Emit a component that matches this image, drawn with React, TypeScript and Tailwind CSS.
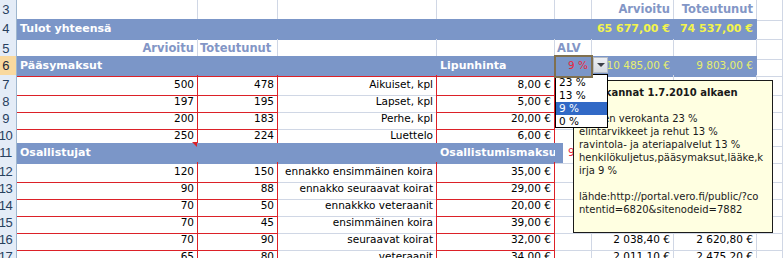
import React from "react";

const fmt = (v: number) => {
  const [i, d] = v.toFixed(2).split(".");
  return i.replace(/\B(?=(\d{3})+(?!\d))/g, " ") + "," + d + " €";
};

const cols = "grid grid-cols-[17px_181px_80px_159px_118px_37px_82px_83px_1fr]";
const cell = "px-[3px] flex items-center whitespace-nowrap overflow-hidden border-r border-b";

const GRID = "border-[#d0d7e5]";
const RED = "border-[#dc2128]";
const LABEL = "border-r-[#dc2128] border-b-[#d0d7e5]";
const BAND = "bg-[#7b96c8] border-[#7b96c8]";
const BANDRED = "bg-[#7b96c8] border-r-[#7b96c8] border-b-[#dc2128]";

const right = "justify-end";
const hdr = "font-bold text-[11.5px] text-[#8396c6]";
const white = "font-bold text-[11px] text-white";
const yellow = "font-bold text-[11px] text-[#f3f44c] justify-end";
const pale = "text-[#e6ef6e] justify-end";

type C = [string, string];

const tickets = [
  [500, 478, "Aikuiset, kpl", 8],
  [197, 195, "Lapset, kpl", 5],
  [200, 183, "Perhe, kpl", 20],
  [250, 224, "Luettelo", 6],
] as const;

const fees = [
  [120, 150, "ennakko ensimmäinen koira", 35],
  [90, 88, "ennakko seuraavat koirat", 29],
  [70, 50, "ennakkko veteraanit", 20],
  [70, 45, "ensimmäinen koira", 39],
  [70, 90, "seuraavat koirat", 32],
  [65, 80, "veteraanit", 34],
] as const;

const dataRow = (r: readonly [number, number, string, number]): C[] => [
  [String(r[0]), `${RED} ${right}`],
  [String(r[1]), `${RED} ${right}`],
  [r[2], `${LABEL} ${right}`],
  [fmt(r[3]), `${RED} ${right}`],
  ["", GRID],
  [fmt(r[0] * r[3] * 0.91), `${GRID} ${right}`],
  [fmt(r[1] * r[3] * 0.91), `${GRID} ${right}`],
  ["", GRID],
];

const rows: { n: number; h: string; active?: boolean; cells: C[] }[] = [
  {
    n: 3,
    h: "h-[19px]",
    cells: [
      ["", GRID], ["", GRID], ["", GRID], ["", GRID], ["", GRID],
      ["Arvioitu", `${GRID} ${hdr} ${right}`],
      ["Toteutunut", `${GRID} ${hdr} ${right}`],
      ["", GRID],
    ],
  },
  {
    n: 4,
    h: "h-[20px]",
    cells: [
      ["Tulot yhteensä", `${BAND} ${white}`],
      ["", BAND], ["", BAND], ["", BAND], ["", BAND],
      ["65 677,00 €", `${BAND} ${yellow}`],
      ["74 537,00 €", `${BAND} ${yellow}`],
      ["", GRID],
    ],
  },
  {
    n: 5,
    h: "h-[17px]",
    cells: [
      ["Arvioitu", `${GRID} ${hdr} ${right}`],
      ["Toteutunut", `${GRID} ${hdr} pl-[2px]`],
      ["", GRID], ["", GRID],
      ["ALV", `${GRID} ${hdr} pl-[2px]`],
      ["", GRID], ["", GRID], ["", GRID],
    ],
  },
  {
    n: 6,
    h: "h-[19px]",
    active: true,
    cells: [
      ["Pääsymaksut", `${BANDRED} ${white}`],
      ["", BANDRED], ["", BANDRED],
      ["Lipunhinta", `${BANDRED} ${white}`],
      ["9 %", `${BAND} text-[#e8283c] ${right} relative z-10 outline-2 outline-[#80704e] -outline-offset-1`],
      ["10 485,00 €", `${BAND} ${pale}`],
      ["9 803,00 €", `${BAND} ${pale}`],
      ["", GRID],
    ],
  },
  ...tickets.map((t, i) => ({ n: 7 + i, h: "h-[17px]", cells: dataRow(t) })),
  {
    n: 11,
    h: "h-[19px]",
    cells: [
      ["Osallistujat", `${BAND} ${white}`],
      ["", BAND], ["", BAND],
      ["Osallistumismaksu", `${BAND} ${white} !overflow-visible`],
      ["9 %", `${GRID} text-[#e8283c] ${right} bg-[linear-gradient(to_right,#7b96c8_8px,white_8px)]`],
      ["", GRID], ["", GRID], ["", GRID],
    ],
  },
  ...fees.map((t, i) => ({ n: 12 + i, h: "h-[17px]", cells: dataRow(t) })),
];

const tip = [
  { t: "Verokannat 1.7.2010 alkaen", b: true },
  { t: "" },
  { t: "Yleinen verokanta 23 %" },
  { t: "elintarvikkeet ja rehut 13 %" },
  { t: "ravintola- ja ateriapalvelut 13 %" },
  { t: "henkilökuljetus,pääsymaksut,lääke,k" },
  { t: "irja 9 %" },
  { t: "" },
  { t: "lähde:http://portal.vero.fi/public/?co" },
  { t: "ntentid=6820&sitenodeid=7882" },
];

export default function App() {
  return (
    <div className="relative w-[783px] h-[258px] overflow-hidden bg-white font-['DejaVu_Sans',Verdana,sans-serif] text-[10.5px] text-black">
      {rows.map((r) => (
        <div key={r.n} className={`${cols} ${r.h}`}>
          <div
            className={`flex items-center justify-center pr-[5px] border-r border-b border-r-[#9eb6ce] font-['Liberation_Sans',Arial,sans-serif] text-[13px] tracking-[-0.5px] ${
              r.active
                ? "bg-[#f9d99f] border-b-[#f2b66a] text-[#1d2a3a]"
                : "bg-[#e4ecf7] border-b-[#c5d5e8] text-[#27405e]"
            }`}
          >
            {r.n}
          </div>
          {r.cells.map(([t, c], i) => (
            <div key={i} className={`${cell} ${c}`}>
              {t}
            </div>
          ))}
        </div>
      ))}

      {/* comment marker */}
      <div className="absolute left-[192px] top-[142px] w-0 h-0 border-t-[5px] border-l-[5px] border-t-[#dc2128] border-l-transparent" />

      {/* validation arrow */}
      <div className="absolute left-[593px] top-[57px] w-[15px] h-[16px] bg-[linear-gradient(#eef0f4,#d6dbe3)] border border-[#b6bcc6] flex items-center justify-center">
        <div className="w-0 h-0 border-l-[4px] border-r-[4px] border-t-[4px] border-l-transparent border-r-transparent border-t-[#3c4048]" />
      </div>

      {/* comment box */}
      <div className="absolute left-[573px] top-[80px] w-[200px] h-[153px] bg-[#ffffe1] border border-[#1a1a1a] pl-[5px] pt-[5px] text-[10px] leading-[13px] text-[#1a1a1a]">
        {tip.map((l, i) => (
          <div key={i} className={`h-[13px] whitespace-nowrap ${l.b ? "font-bold" : ""}`}>
            {l.t}
          </div>
        ))}
      </div>

      {/* dropdown list */}
      <div className="absolute left-[555px] top-[74px] w-[53px] h-[54px] bg-white border border-black py-[1px] text-[10.5px]">
        {["23 %", "13 %", "9 %", "0 %"].map((o) => (
          <div
            key={o}
            className={`h-[13px] leading-[13px] pl-[3px] ${o === "9 %" ? "bg-[#3169c6] text-white" : ""}`}
          >
            {o}
          </div>
        ))}
      </div>
    </div>
  );
}
